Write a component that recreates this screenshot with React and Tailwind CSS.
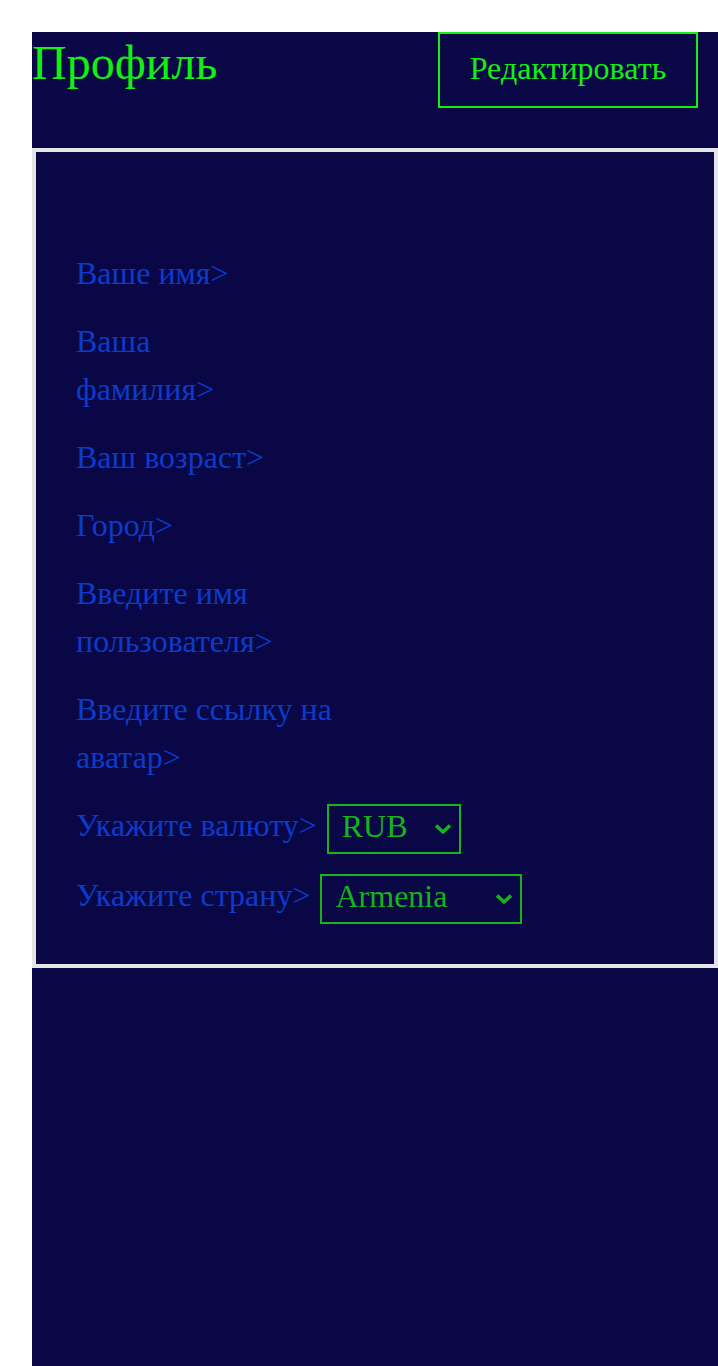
const fields = [
  ['Ваше имя>'],
  ['Ваша', 'фамилия>'],
  ['Ваш возраст>'],
  ['Город>'],
  ['Введите имя', 'пользователя>'],
  ['Введите ссылку на', 'аватар>'],
];

function Label({ lines, className = '' }) {
  return (
    <p className={`text-[32px] leading-[48px] text-[#0b3bcc] ${className}`}>
      {lines.map((line, i) => (
        <span key={i} className="block">
          {line}
        </span>
      ))}
    </p>
  );
}

function Chevron() {
  return (
    <svg
      className="absolute right-[7px] top-[17px] pointer-events-none"
      width="18"
      height="12"
      viewBox="0 0 18 12"
      fill="none"
    >
      <path d="M2 2.5L9 9L16 2.5" stroke="#14b41c" strokeWidth="3.6" strokeLinejoin="round" />
    </svg>
  );
}

function SelectRow({ label, value, width, className = '' }) {
  return (
    <div className={`flex items-start gap-[10px] h-[50px] ${className}`}>
      <Label lines={[label]} className="-mt-[3px]" />
      <div className={`relative h-[50px] border-2 border-[#14b41c] overflow-hidden ${width}`}>
        <select className="appearance-none relative -top-[4px] block w-full h-[46px] bg-transparent text-[#14b41c] text-[32px] leading-normal pl-[13px] pr-8 outline-none">
          <option>{value}</option>
        </select>
        <Chevron />
      </div>
    </div>
  );
}

export default function App() {
  return (
    <div className="bg-white pt-8 pl-8 min-h-screen" style={{ fontFamily: '"Liberation Serif", "DejaVu Serif", serif' }}>
      <div className="bg-[#0a0746] min-h-[1334px]">
        <header className="flex justify-between items-start h-[116px]">
          <h1 className="text-[48px] leading-[62px] text-[#12f012]">Профиль</h1>
          <button className="w-[260px] h-[76px] mr-[20px] pb-1 border-2 border-[#12f012] text-[32px] leading-normal text-[#12f012] bg-transparent">
            Редактировать
          </button>
        </header>

        <section className="border-4 border-[#e6e4e6] h-[820px] pt-[97px] px-10 pb-10 flex flex-col gap-5">
          {fields.map((lines) => (
            <Label key={lines.join(' ')} lines={lines} />
          ))}

          <SelectRow label="Укажите валюту>" value="RUB" width="w-[134px]" className="mt-[3px]" />
          <SelectRow label="Укажите страну>" value="Armenia" width="w-[202px]" />
        </section>
      </div>
    </div>
  );
}
